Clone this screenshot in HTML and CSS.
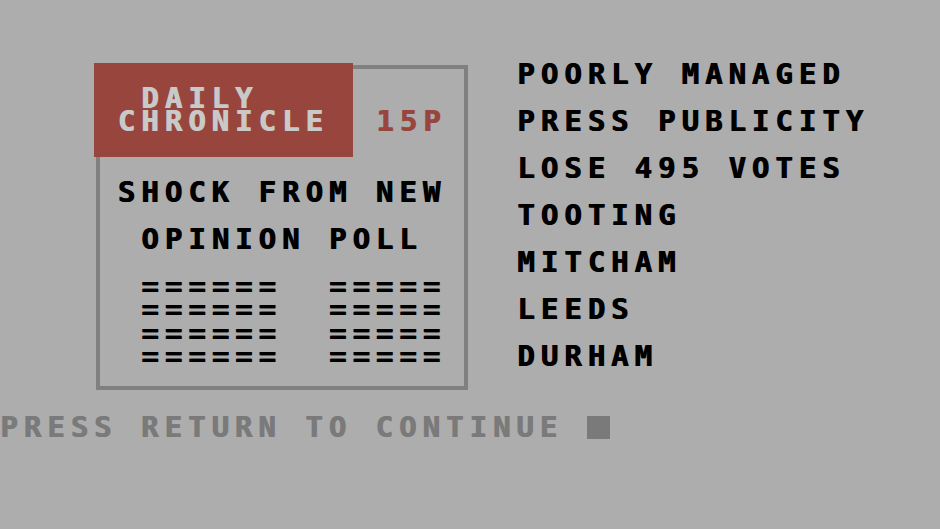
FILE: index.html
```html
<!DOCTYPE html>
<html lang="en">
<head>
  <meta charset="UTF-8" />
  <meta name="viewport" content="width=device-width, initial-scale=1.0"/>
  <title>Daily Chronicle</title>
  <link rel="stylesheet" href="styles.css">
</head>
<body>

  <div class="screen">
    <div class="top">
      <div class="paper">
        <div class="masthead">
          <div class="title"> DAILY
CHRONICLE</div>
          <div class="price">15P</div>
        </div>
        <div class="story">
          <div class="headline">SHOCK FROM NEW</div>
          <div class="headline second">OPINION POLL</div>
          <div class="columns">======  =====
======  =====
======  =====
======  =====</div>
        </div>
      </div>

      <div class="report">
        <div>POORLY MANAGED</div>
        <div>PRESS PUBLICITY</div>
        <div>LOSE 495 VOTES</div>
        <div>TOOTING</div>
        <div>MITCHAM</div>
        <div>LEEDS</div>
        <div>DURHAM</div>
      </div>
    </div>

    <div class="prompt">PRESS RETURN TO CONTINUE <span class="cursor"></span></div>
  </div>

</body>
</html>
```

FILE: styles.css
```css
* { box-sizing: border-box; margin: 0; padding: 0; }

/* one character cell = 23.5px square */
body {
  background-color: #adadad;
  color: #000;
  font-family: 'DejaVu Sans Mono', 'Liberation Mono', monospace;
  font-weight: bold;
  font-size: 29px;
  line-height: 23.5px;
  letter-spacing: 6px;
  text-shadow: 1px 0 0 currentColor;
  overflow: hidden;
}

.screen {
  padding-top: 63px;
}

.top {
  display: flex;
}

.paper {
  margin-left: 94px;
  width: 376px;
  height: 329px;
  box-shadow: inset 0 0 0 2px #adadad, inset 0 0 0 6px #808080;
}

.masthead {
  display: flex;
  height: 94px;
}

.title {
  background-color: #98463d;
  color: #c9c9c9;
  width: 258.5px;
  padding: 23.5px 0 0 23.5px;
  white-space: pre;
}

.price {
  color: #98463d;
  padding: 47px 0 0 23.5px;
}

.story {
  padding-top: 23.5px;
}

.headline { padding-left: 23.5px; }

.headline.second {
  padding-left: 47px;
  margin-top: 23.5px;
}

.columns {
  white-space: pre;
  padding-left: 47px;
  margin-top: 23.5px;
}

.report {
  margin-left: 47px;
  display: grid;
  row-gap: 23.5px;
  align-content: start;
}

.prompt {
  color: #7a7a7a;
  margin-top: 23.5px;
  white-space: pre;
}

.cursor {
  display: inline-block;
  width: 23.5px;
  height: 23.5px;
  background-color: #7a7a7a;
  vertical-align: top;
}
```
